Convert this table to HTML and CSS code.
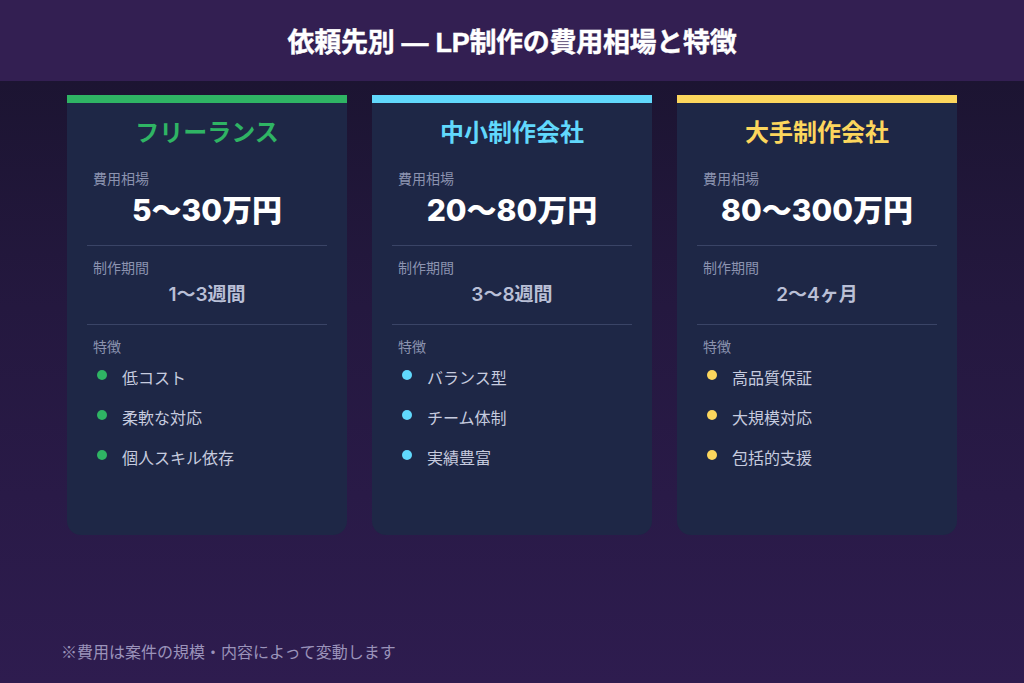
FILE: index.html
```html
<!DOCTYPE html>
<html lang="ja">
<head>
<meta charset="utf-8">
<link rel="stylesheet" href="styles.css">
</head>
<body>
<header class="header"><h1>依頼先別 — LP制作の費用相場と特徴</h1></header>
<main class="main">
  <div class="cards">
    <section class="card green">
      <h2 class="card-title">フリーランス</h2>
      <div class="block">
        <div class="label">費用相場</div>
        <div class="price">5〜30万円</div>
      </div>
      <div class="block">
        <div class="label">制作期間</div>
        <div class="period">1〜3週間</div>
      </div>
      <div class="block last">
        <div class="label">特徴</div>
        <ul class="features">
          <li>低コスト</li>
          <li>柔軟な対応</li>
          <li>個人スキル依存</li>
        </ul>
      </div>
    </section>
    <section class="card blue">
      <h2 class="card-title">中小制作会社</h2>
      <div class="block">
        <div class="label">費用相場</div>
        <div class="price">20〜80万円</div>
      </div>
      <div class="block">
        <div class="label">制作期間</div>
        <div class="period">3〜8週間</div>
      </div>
      <div class="block last">
        <div class="label">特徴</div>
        <ul class="features">
          <li>バランス型</li>
          <li>チーム体制</li>
          <li>実績豊富</li>
        </ul>
      </div>
    </section>
    <section class="card yellow">
      <h2 class="card-title">大手制作会社</h2>
      <div class="block">
        <div class="label">費用相場</div>
        <div class="price">80〜300万円</div>
      </div>
      <div class="block">
        <div class="label">制作期間</div>
        <div class="period">2〜4ヶ月</div>
      </div>
      <div class="block last">
        <div class="label">特徴</div>
        <ul class="features">
          <li>高品質保証</li>
          <li>大規模対応</li>
          <li>包括的支援</li>
        </ul>
      </div>
    </section>
  </div>
  <p class="note">※費用は案件の規模・内容によって変動します</p>
</main>
</body>
</html>
```

FILE: styles.css
```css
* { box-sizing: border-box; }
html, body { margin: 0; padding: 0; }
body {
  width: 1024px;
  height: 683px;
  overflow: hidden;
  font-family: "Noto Sans CJK JP", "Noto Sans", sans-serif;
  background: linear-gradient(180deg, #19132d 0%, #24183f 45%, #2e1c4f 100%);
  display: flex;
  flex-direction: column;
}
.header {
  height: 81px;
  background: #331f52;
  display: flex;
  align-items: center;
  justify-content: center;
}
.header h1 {
  margin: 0;
  color: #ffffff;
  font-family: "Liberation Sans", "Noto Sans CJK JP", sans-serif;
  font-size: 27px;
  font-weight: 700;
  letter-spacing: -0.3px;
  -webkit-text-stroke: 0.4px #ffffff;
}
.main {
  flex: 1;
  display: flex;
  flex-direction: column;
  padding: 14px 0 0;
}
.cards {
  display: flex;
  justify-content: center;
  gap: 25px;
}
.card {
  width: 280px;
  height: 440px;
  background: #1e2746;
  border-top: 8px solid;
  border-radius: 0 0 14px 14px;
  padding: 0 20px;
  display: flex;
  flex-direction: column;
}
.card.green { border-top-color: #2fb464; }
.card.blue { border-top-color: #61d8fc; }
.card.yellow { border-top-color: #fcd65d; }
.card-title {
  margin: 0;
  height: 54px;
  padding-top: 8px;
  text-align: center;
  font-size: 24px;
  font-weight: 700;
  line-height: 40px;
}
.green .card-title { color: #2fb464; }
.blue .card-title { color: #61d8fc; }
.yellow .card-title { color: #fcd65d; }
.block {
  border-bottom: 1px solid #3a4466;
  padding: 11px 6px 0;
}
.block.last { border-bottom: none; }
.label {
  font-size: 14px;
  color: #8c93b0;
  line-height: 20px;
}
.price {
  text-align: center;
  font-family: "Inter", "Noto Sans CJK JP", sans-serif;
  font-weight: 800;
  font-size: 30px;
  color: #ffffff;
  line-height: 36px;
  height: 57px;
  padding-top: 4px;
}
.period {
  text-align: center;
  font-family: "Inter", "Noto Sans CJK JP", sans-serif;
  font-weight: 600;
  font-size: 19px;
  color: #b9bfd6;
  line-height: 26px;
  height: 47px;
  padding-top: 5px;
}
.features {
  list-style: none;
  margin: 0;
  padding: 9px 0 0 4px;
}
.features li {
  position: relative;
  padding-left: 25px;
  font-size: 16px;
  line-height: 24px;
  color: #c6cbdf;
  margin-bottom: 16px;
}
.features li::before {
  content: "";
  position: absolute;
  left: 0;
  top: 5px;
  width: 10px;
  height: 10px;
  border-radius: 50%;
}
.green .features li::before { background: #2fb464; }
.blue .features li::before { background: #61d8fc; }
.yellow .features li::before { background: #fcd65d; }
.note {
  margin: auto 0 20px 61px;
  font-size: 16px;
  color: #9b93ba;
}
```
